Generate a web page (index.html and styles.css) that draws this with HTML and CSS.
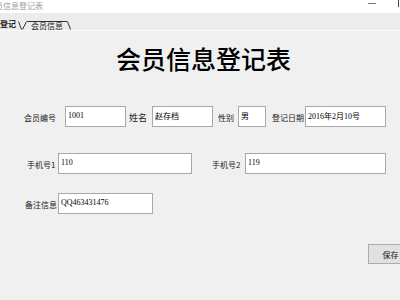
FILE: index.html
```html
<!DOCTYPE html>
<html lang="zh-CN">
    <head>
        <meta charset="UTF-8" />
        <title>会员信息登记表</title>
        <link rel="stylesheet" href="styles.css">
    </head>

    <body>
        <div class="titlebar">
            <span class="wintitle">会员信息登记表</span>
            <span class="minbtn"></span>
            <span class="closebtn"></span>
        </div>
        <div class="tabstrip">
            <span class="tab on">登记</span>
            <svg class="edge" width="10" height="9" viewBox="0 0 10 9">
                <path d="M1.5 0.5 L4.5 8.5 M5.5 8.5 L9.5 0.5" stroke="#333" stroke-width="1" fill="none" />
            </svg>
            <span class="tab">会员信息</span>
            <svg class="edge" width="6" height="9" viewBox="0 0 6 9">
                <path d="M0.5 0.5 L3.5 8.5" stroke="#333" stroke-width="1" fill="none" />
            </svg>
        </div>
        <div class="panel">
            <h1 class="heading">会员信息登记表</h1>

            <div class="row row1">
                <label class="lbl">会员编号</label>
                <input class="box f-no" value="1001" readonly>
                <label class="lbl big l-name">姓名</label>
                <input class="box f-name" value="赵存档" readonly>
                <label class="lbl l-sex">性别</label>
                <input class="box f-sex" value="男" readonly>
                <label class="lbl l-date">登记日期</label>
                <input class="box f-date" value="2016年2月10号" readonly>
            </div>

            <div class="row row2">
                <label class="lbl l-tel">手机号1</label>
                <input class="box f-tel1" value="110" readonly>
                <label class="lbl l-tel l-tel2">手机号2</label>
                <input class="box f-tel2" value="119" readonly>
            </div>

            <div class="row row3">
                <label class="lbl">备注信息</label>
                <input class="box f-note" value="QQ463431476" readonly>
            </div>

            <div class="actions">
                <button class="save">保存</button>
            </div>
        </div>
    </body>
</html>
```

FILE: styles.css
```css
html, body {
    margin: 0px;
    padding: 0px;
    width: 400px;
    height: 300px;
    overflow: hidden;
    background: #f0f0f0;
    font-family: "Noto Sans CJK SC", "Liberation Sans", sans-serif;
    color: #111;
}

.titlebar {
    display: flex;
    height: 13px;
    background: #fff;
    overflow: hidden;
}

.wintitle {
    margin-left: -13px;
    font-size: 8px;
    line-height: 12px;
    color: #a0a0a0;
    white-space: nowrap;
}

.minbtn {
    margin-left: auto;
    margin-top: 3px;
    width: 8px;
    height: 1px;
    background: #777;
}

.closebtn {
    margin-left: 22px;
    margin-right: 1px;
    width: 1px;
    height: 7px;
    background: #444;
}

.tabstrip {
    display: flex;
    align-items: flex-start;
    box-sizing: border-box;
    height: 18px;
    padding-top: 8px;
    background: #ececec;
    border-bottom: 1px solid #fafafa;
}

.tab {
    height: 8px;
    font-size: 8px;
    line-height: 8px;
    white-space: nowrap;
    color: #222;
}

.tab.on {
    font-weight: bold;
    padding-right: 1px;
    margin-top: -1px;
}

.tab + .edge + .tab {
    border-top: 1px solid #333;
    padding: 0px 4px;
    height: 8px;
}

.edge {
    flex: none;
}

.panel {
    overflow: hidden;
}

.heading {
    margin: 15px 0px 0px 116px;
    font-size: 25px;
    line-height: 25px;
    font-weight: 500;
    color: #000;
    white-space: nowrap;
}

.row {
    display: flex;
    align-items: center;
    height: 21px;
}

.row1 {
    margin-top: 35px;
    padding-left: 24px;
}

.row2 {
    margin-top: 26px;
    padding-left: 27px;
}

.row3 {
    margin-top: 19px;
    padding-left: 25px;
}

.lbl {
    flex: none;
    font-size: 8px;
    line-height: 10px;
    padding-top: 3px;
    white-space: nowrap;
    color: #222;
}

.lbl.big {
    font-size: 9px;
    width: 21px;
}

.box {
    flex: none;
    box-sizing: border-box;
    height: 21px;
    margin: 0px;
    padding: 0px 2px 2px 2px;
    border: 1px solid #a8a8a8;
    background: #fff;
    font-family: "Liberation Serif", "Noto Sans CJK SC", serif;
    font-size: 8px;
    color: #000;
    outline: none;
}

.f-no { margin-left: 9px; width: 61px; }
.l-name { margin-left: 3px; }
.f-name { margin-left: 2px; width: 61px; }
.l-sex { margin-left: 5px; }
.f-sex { margin-left: 4px; width: 28px; }
.l-date { margin-left: 6px; }
.f-date { margin-left: 1px; width: 81px; }

.l-tel { width: 31px; }
.f-tel1 { width: 134px; }
.l-tel2 { margin-left: 20px; width: 30px; }
.f-tel2 { margin-left: 3px; width: 141px; }

.f-note { margin-left: 1px; width: 95px; }

.actions {
    display: flex;
    margin-top: 30px;
    padding-left: 368px;
}

.save {
    flex: none;
    width: 45px;
    height: 20px;
    padding: 0px;
    background: #e1e1e1;
    border: 1px solid #adadad;
    font-family: "Noto Sans CJK SC", sans-serif;
    font-size: 8px;
    color: #111;
}
```
